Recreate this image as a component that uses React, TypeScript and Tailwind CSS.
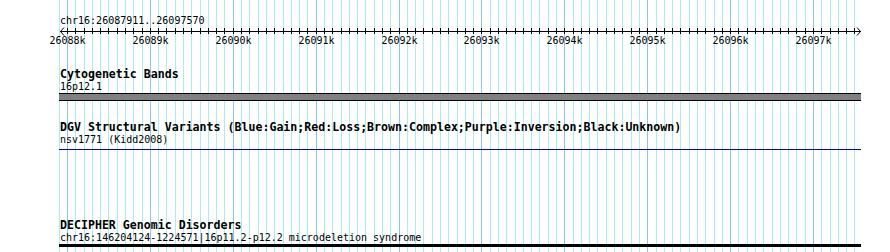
import React from 'react'

// genome coordinates -> page pixels (26088k sits at x=67, 26097k at x=813)
const pxPerBp = 746 / 9000
const toX = (bp: number) => Math.round(67 + (bp - 26088000) * pxPerBp)

const gridBps: number[] = []
for (let b = 26087900; b <= 26097500; b += 100) gridBps.push(b)

const majorBps: number[] = []
for (let b = 26088000; b <= 26097000; b += 1000) majorBps.push(b)

const mono = { fontFamily: '"DejaVu Sans Mono", "Liberation Mono", monospace' }

function Grid() {
  return (
    <svg className="absolute inset-0" width={890} height={252} xmlns="http://www.w3.org/2000/svg">
      {gridBps.map((b) => (
        <rect
          key={b}
          x={toX(b)}
          y={0}
          width={1}
          height={252}
          fill={b % 1000 === 0 ? '#8ec4ec' : '#aaeef0'}
        />
      ))}
    </svg>
  )
}

function Ruler() {
  return (
    <svg width={890} height={20} xmlns="http://www.w3.org/2000/svg" className="block">
      <rect x={60} y={4} width={801} height={1} fill="#000" />
      {gridBps
        .filter((b) => b >= 26088000)
        .map((b) => (
          <rect key={b} x={toX(b)} y={1} width={1} height={6} fill="#000" />
        ))}
      <polyline points="64,0.5 60.5,4.5 64,8.5" fill="none" stroke="#000" strokeWidth={1} />
      <polyline points="857,0.5 860.5,4.5 857,8.5" fill="none" stroke="#000" strokeWidth={1} />
      {majorBps.map((b) => (
        <text
          key={b}
          x={toX(b) + 0.5}
          y={16.5}
          textAnchor="middle"
          fontSize={10}
          fill="#000"
          style={mono}
        >
          {Math.round(b / 1000)}k
        </text>
      ))}
    </svg>
  )
}

function TrackTitle({ children, className = '' }: { children: React.ReactNode; className?: string }) {
  return (
    <div className={`pl-[60px] text-[11.6px] leading-[13px] font-bold text-black whitespace-nowrap ${className}`} style={mono}>
      {children}
    </div>
  )
}

function TrackLabel({ children }: { children: React.ReactNode }) {
  return (
    <div className="pl-[60px] text-[10px] leading-[12px] text-black whitespace-nowrap" style={mono}>
      {children}
    </div>
  )
}

export default function App() {
  return (
    <div className="relative w-[890px] h-[252px] bg-white overflow-hidden">
      <Grid />
      <div className="relative flex flex-col">
        <div className="mt-[15px]">
          <TrackLabel>chr16:26087911..26097570</TrackLabel>
        </div>
        <Ruler />

        <TrackTitle className="mt-[21px]">Cytogenetic Bands</TrackTitle>
        <TrackLabel>16p12.1</TrackLabel>
        <div className="ml-[59px] w-[802px] h-[8px] bg-[#808080] border-y border-black" />

        <TrackTitle className="mt-[20px]">
          DGV Structural Variants (Blue:Gain;Red:Loss;Brown:Complex;Purple:Inversion;Black:Unknown)
        </TrackTitle>
        <TrackLabel>nsv1771 (Kidd2008)</TrackLabel>
        <div className="ml-[59px] w-[802px] h-px mt-[3px] bg-[#0000cc]" />

        <TrackTitle className="mt-[69px]">DECIPHER Genomic Disorders</TrackTitle>
        <TrackLabel>chr16:146204124-1224571|16p11.2-p12.2 microdeletion syndrome</TrackLabel>
        <div className="ml-[59px] w-[802px] h-[3px] bg-black" />
      </div>
    </div>
  )
}
